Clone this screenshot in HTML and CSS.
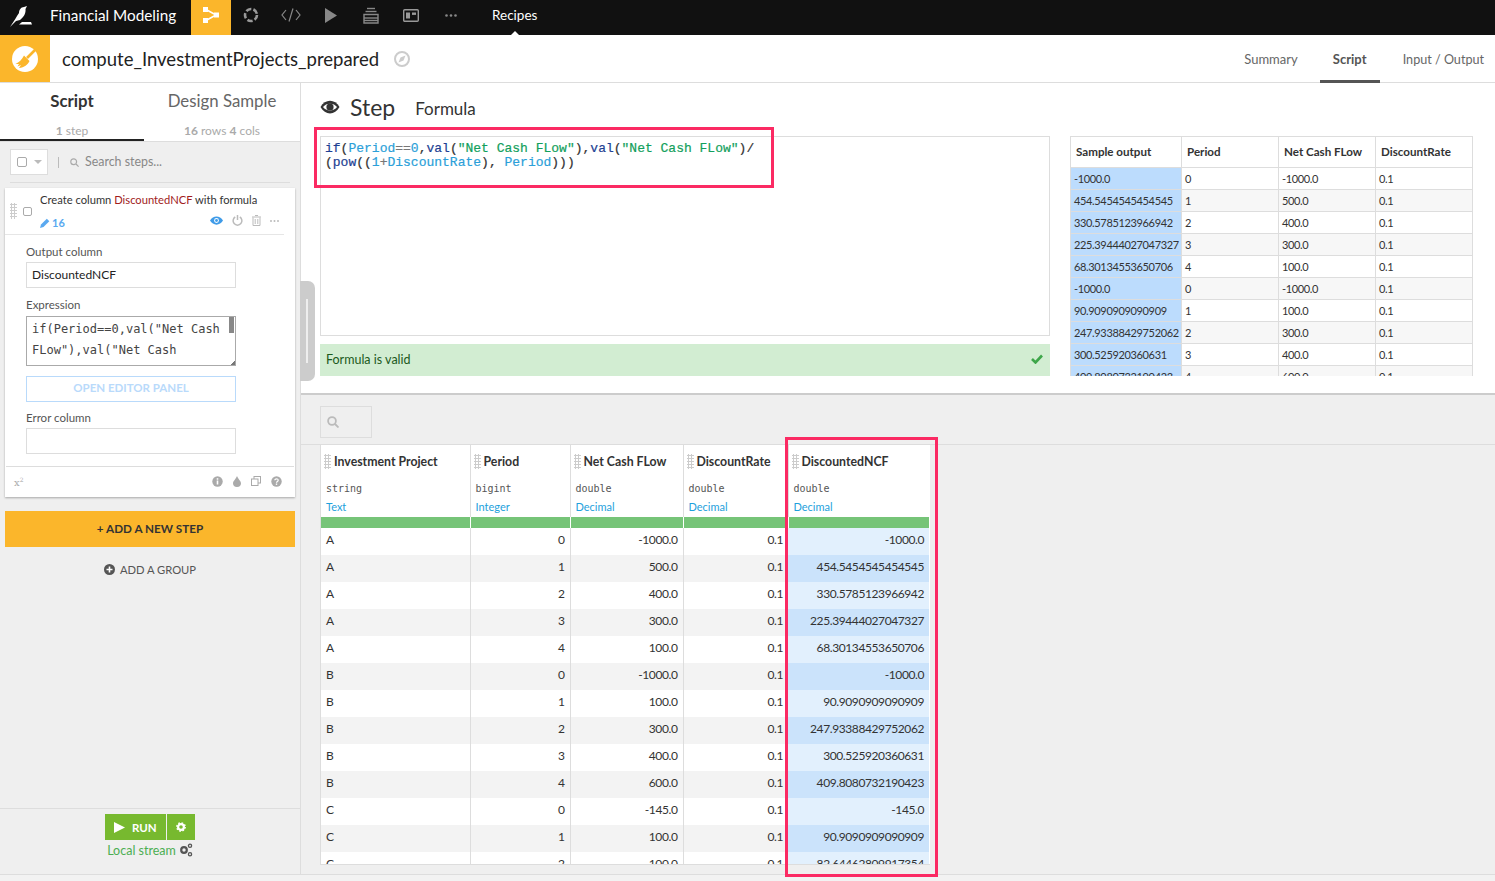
FILE: index.html
```html
<!DOCTYPE html>
<html lang="en">
<head>
<meta charset="utf-8">
<title>compute_InvestmentProjects_prepared</title>
<link rel="stylesheet" href="styles.css">
</head>
<body>
<nav class="topbar">
  <svg class="logo" width="24" height="24" viewBox="0 0 24 24"><path d="M1 23 C5 17 8 12 10 9 C10 6 12 3 15 3 L18 2 L16.5 5 C17 9 15 13 11 16 L7 17 C5 19 3 21 1 23Z" fill="#fff"/><path d="M13 18 L22 18 L23 20.5 L10 20.5Z" fill="#fff"/></svg>
  <span class="project">Financial Modeling</span>
  <span class="nav-item active"><svg width="16" height="18" viewBox="0 0 16 18"><g fill="#fff"><rect x="0" y="1" width="5" height="5"/><rect x="0" y="12" width="5" height="5"/><rect x="11" y="6.5" width="5" height="5"/></g><path d="M3 3.5 L13 9 L3 14.5" fill="none" stroke="#fff" stroke-width="1.6"/></svg></span>
  <span class="nav-item"><svg width="16" height="16" viewBox="0 0 16 16"><circle cx="8" cy="8" r="6" fill="none" stroke="#999" stroke-width="2.6" stroke-dasharray="5.4 2.1"/></svg></span>
  <span class="nav-item"><svg width="20" height="14" viewBox="0 0 20 14" fill="none" stroke="#888" stroke-width="1.2"><path d="M5 2 L1 7 L5 12"/><path d="M15 2 L19 7 L15 12"/><path d="M12 0.5 L8 13.5"/></svg></span>
  <span class="nav-item"><svg width="12" height="15" viewBox="0 0 12 15"><polygon points="0,0 12,7.5 0,15" fill="#888"/></svg></span>
  <span class="nav-item"><svg width="16" height="17" viewBox="0 0 16 17" fill="none" stroke="#888" stroke-width="1.4"><path d="M4 1.5 H12"/><path d="M2.5 4.5 H13.5"/><path d="M1 7.5 H15 V16 H1Z"/><path d="M1 11 H15"/><path d="M1 13.5 H15"/></svg></span>
  <span class="nav-item"><svg width="16" height="13" viewBox="0 0 16 13"><rect x="0.7" y="0.7" width="14.6" height="11.6" rx="1" fill="none" stroke="#999" stroke-width="1.4"/><rect x="3" y="3.5" width="4" height="6" fill="#999"/><rect x="9" y="3.5" width="4" height="2.4" fill="#999"/></svg></span>
  <span class="nav-item"><svg width="12" height="3" viewBox="0 0 12 3" fill="#888"><circle cx="1.5" cy="1.5" r="1.3"/><circle cx="6" cy="1.5" r="1.3"/><circle cx="10.5" cy="1.5" r="1.3"/></svg></span>
  <span class="nav-link">Recipes</span>
</nav>

<header class="recipe-head">
  <span class="recipe-icon"><svg width="26" height="26" viewBox="0 0 26 26"><circle cx="13" cy="13" r="13" fill="#fff"/><path d="M24 3 L15 12" stroke="#fbb62b" stroke-width="2.6"/><path d="M12 9.5 L17.5 15 C15.5 19 12.5 21.5 7 22 L9 19 L5.5 20.5 L7 18 L3.5 18 C7 16.5 10 13.5 12 9.5Z" fill="#fbb62b"/></svg></span>
  <h1 class="recipe-name">compute_InvestmentProjects_prepared</h1>
  <svg class="compass" width="16" height="16" viewBox="0 0 16 16"><circle cx="8" cy="8" r="7" fill="none" stroke="#ccc" stroke-width="2"/><path d="M11.5 4.5 L9.5 9.5 L4.5 11.5 L6.5 6.5Z" fill="#ccc"/></svg>
  <div class="head-tabs">
    <span class="head-tab">Summary</span>
    <span class="head-tab current">Script</span>
    <span class="head-tab">Input / Output</span>
  </div>
</header>

<div class="workspace">
  <aside class="sidebar">
    <div class="side-tabs">
      <div class="side-tab current"><span class="side-title">Script</span><span class="side-sub"><b>1</b> step</span></div>
      <div class="side-tab"><span class="side-title">Design Sample</span><span class="side-sub"><b>16</b> rows <b>4</b> cols</span></div>
    </div>
    <div class="side-body">
      <div class="search-row">
        <span class="select-box"><span class="check"></span><span class="caret"></span></span>
        <span class="pipe"></span>
        <svg width="9" height="9" viewBox="0 0 9 9" fill="none" stroke="#aaa" stroke-width="1.2"><circle cx="3.7" cy="3.7" r="2.9"/><path d="M6 6 L8.6 8.6"/></svg>
        <span class="search-text">Search steps...</span>
      </div>
      <section class="card">
        <div class="card-top">
          <span class="grip grip-card"></span>
          <span class="check small"></span>
          <div class="card-desc">
            <div>Create column <span class="red">DiscountedNCF</span> with formula</div>
            <div class="card-meta">
              <span class="edits"><svg width="10" height="10" viewBox="0 0 10 10"><path d="M0 10 L1 6.5 L6.8 0.7 L9.3 3.2 L3.5 9Z" fill="#5aa9f0"/></svg>16</span>
              <span class="card-icons">
                <svg width="13" height="9" viewBox="0 0 13 9"><path d="M0 4.5 C3 -1 10 -1 13 4.5 C10 10 3 10 0 4.5Z" fill="#3f9be8"/><circle cx="6.5" cy="4.5" r="2.4" fill="#fff"/><circle cx="6.5" cy="4.5" r="1.4" fill="#3f9be8"/></svg>
                <svg width="11" height="11" viewBox="0 0 11 11" fill="none" stroke="#bbb" stroke-width="1.5"><path d="M3.2 2 A4.4 4.4 0 1 0 7.8 2"/><path d="M5.5 0 V5"/></svg>
                <svg width="9" height="11" viewBox="0 0 9 11" fill="none" stroke="#bbb" stroke-width="1"><path d="M1 2.5 V10.5 H8 V2.5"/><path d="M0 2 H9"/><path d="M3 0.5 H6"/><path d="M3.2 4 V9 M5.8 4 V9"/></svg>
                <svg width="9" height="2" viewBox="0 0 9 2" fill="#bbb"><circle cx="1" cy="1" r="1"/><circle cx="4.5" cy="1" r="1"/><circle cx="8" cy="1" r="1"/></svg>
              </span>
            </div>
          </div>
        </div>
        <div class="form">
          <label class="field-label">Output column</label>
          <div class="input">DiscountedNCF</div>
          <label class="field-label">Expression</label>
          <div class="expr">if(Period==0,val("Net Cash FLow"),val("Net Cash FLow")/(pow((1+DiscountRate), Period)))<span class="thumb"></span><span class="resizer"></span></div>
          <div class="open-editor">OPEN EDITOR PANEL</div>
          <label class="field-label">Error column</label>
          <div class="input"></div>
        </div>
        <div class="card-foot">
          <span class="sup">x<sup>2</sup></span>
          <span class="foot-icons">
            <svg width="11" height="11" viewBox="0 0 11 11"><circle cx="5.5" cy="5.5" r="5.2" fill="#aaa"/><rect x="4.7" y="4.5" width="1.6" height="4" fill="#fff"/><rect x="4.7" y="2.2" width="1.6" height="1.5" fill="#fff"/></svg>
            <svg width="8" height="11" viewBox="0 0 8 11"><path d="M4 0 C5 3 8 5 8 7.3 A4 3.7 0 0 1 0 7.3 C0 5 3 3 4 0Z" fill="#aaa"/></svg>
            <svg width="10" height="10" viewBox="0 0 10 10" fill="#fff" stroke="#aaa"><rect x="3" y="0.5" width="6.5" height="6.5"/><rect x="0.5" y="3" width="6.5" height="6.5"/></svg>
            <svg width="11" height="11" viewBox="0 0 11 11"><circle cx="5.5" cy="5.5" r="5.2" fill="#aaa"/><path d="M3.8 4.2 C3.8 2.3 7.2 2.3 7.2 4.2 C7.2 5.5 5.5 5.3 5.5 6.7" fill="none" stroke="#fff" stroke-width="1.2"/><rect x="4.8" y="7.5" width="1.4" height="1.4" fill="#fff"/></svg>
          </span>
        </div>
      </section>
      <div class="add-step">+ ADD A NEW STEP</div>
      <div class="add-group"><svg width="11" height="11" viewBox="0 0 11 11"><circle cx="5.5" cy="5.5" r="5.5" fill="#555"/><path d="M5.5 2.5 V8.5 M2.5 5.5 H8.5" stroke="#fff" stroke-width="1.6"/></svg>ADD A GROUP</div>
    </div>
    <div class="side-foot">
      <div class="run-group">
        <span class="run"><svg width="11" height="11" viewBox="0 0 11 11"><polygon points="0,0 11,5.5 0,11" fill="#fff"/></svg>RUN</span>
        <span class="run-gear"><svg width="10" height="10" viewBox="0 0 10 10"><circle cx="5" cy="5" r="2.9" fill="none" stroke="#fff" stroke-width="2.2"/><circle cx="5" cy="5" r="4.2" fill="none" stroke="#fff" stroke-width="1.4" stroke-dasharray="1.6 1.7"/></svg></span>
      </div>
      <div class="stream">Local stream <svg width="14" height="14" viewBox="0 0 14 14" fill="none" stroke="#555"><circle cx="5" cy="7" r="2.8" stroke-width="2.2"/><circle cx="11" cy="2.8" r="1.6" stroke-width="1.3"/><circle cx="11" cy="11.2" r="1.6" stroke-width="1.3"/></svg></div>
    </div>
  </aside>

  <main class="content">
    <span class="handle"><span class="handle-slit"></span></span>
    <section class="step-pane">
      <div class="step-title">
        <svg width="20" height="14" viewBox="0 0 20 14"><path d="M0.5 7 C5 -1.5 15 -1.5 19.5 7 C15 15.5 5 15.5 0.5 7Z" fill="#333"/><path d="M3 7 C6 2.5 14 2.5 17 7 C14 11.5 6 11.5 3 7Z" fill="#fff"/><circle cx="10" cy="7" r="3.6" fill="#333"/></svg>
        <span class="step-word">Step</span>
        <span class="step-kind">Formula</span>
      </div>
      <div class="step-cols">
        <div class="editor-col">
          <div class="code"><span class="kw">if</span>(<span class="var">Period</span><span class="op">==</span><span class="var">0</span>,<span class="kw">val</span>(<span class="str">"Net Cash FLow"</span>),<span class="kw">val</span>(<span class="str">"Net Cash FLow"</span>)/<br>(<span class="kw">pow</span>((<span class="var">1</span><span class="op">+</span><span class="var">DiscountRate</span>), <span class="var">Period</span>)))</div>
          <div class="valid"><span>Formula is valid</span><svg width="12" height="10" viewBox="0 0 12 10"><path d="M1 5 L4.5 8.5 L11 1.5" fill="none" stroke="#3ea64a" stroke-width="2.6"/></svg></div>
        </div>
        <div class="sample-wrap">
          <table class="sample">
            <colgroup><col class="s1"><col class="s2"><col class="s2"><col class="s2"></colgroup>
            <thead><tr><th>Sample output</th><th>Period</th><th>Net Cash FLow</th><th>DiscountRate</th></tr></thead>
            <tbody>
              <tr><td>-1000.0</td><td>0</td><td>-1000.0</td><td>0.1</td></tr>
              <tr><td>454.5454545454545</td><td>1</td><td>500.0</td><td>0.1</td></tr>
              <tr><td>330.5785123966942</td><td>2</td><td>400.0</td><td>0.1</td></tr>
              <tr><td>225.39444027047327</td><td>3</td><td>300.0</td><td>0.1</td></tr>
              <tr><td>68.30134553650706</td><td>4</td><td>100.0</td><td>0.1</td></tr>
              <tr><td>-1000.0</td><td>0</td><td>-1000.0</td><td>0.1</td></tr>
              <tr><td>90.9090909090909</td><td>1</td><td>100.0</td><td>0.1</td></tr>
              <tr><td>247.93388429752062</td><td>2</td><td>300.0</td><td>0.1</td></tr>
              <tr><td>300.525920360631</td><td>3</td><td>400.0</td><td>0.1</td></tr>
              <tr><td>409.8080732190423</td><td>4</td><td>600.0</td><td>0.1</td></tr>
            </tbody>
          </table>
        </div>
      </div>
    </section>

    <section class="data-pane">
      <div class="data-search"><svg width="12" height="12" viewBox="0 0 12 12" fill="none" stroke="#bbb" stroke-width="1.8"><circle cx="5" cy="5" r="3.9"/><path d="M8 8 L11.5 11.5"/></svg></div>
      <div class="data-rule">
        <div class="data-wrap">
          <table class="data">
            <colgroup><col class="d1"><col class="d2"><col class="d3"><col class="d4"><col class="d5"></colgroup>
            <thead>
              <tr class="names"><th><span class="grip"></span>Investment Project</th><th><span class="grip"></span>Period</th><th><span class="grip"></span>Net Cash FLow</th><th><span class="grip"></span>DiscountRate</th><th><span class="grip"></span>DiscountedNCF</th></tr>
              <tr class="types"><td>string</td><td>bigint</td><td>double</td><td>double</td><td>double</td></tr>
              <tr class="means"><td>Text</td><td>Integer</td><td>Decimal</td><td>Decimal</td><td>Decimal</td></tr>
              <tr class="quality"><td></td><td></td><td></td><td></td><td></td></tr>
            </thead>
            <tbody>
              <tr><td>A</td><td>0</td><td>-1000.0</td><td>0.1</td><td>-1000.0</td></tr>
              <tr><td>A</td><td>1</td><td>500.0</td><td>0.1</td><td>454.5454545454545</td></tr>
              <tr><td>A</td><td>2</td><td>400.0</td><td>0.1</td><td>330.5785123966942</td></tr>
              <tr><td>A</td><td>3</td><td>300.0</td><td>0.1</td><td>225.39444027047327</td></tr>
              <tr><td>A</td><td>4</td><td>100.0</td><td>0.1</td><td>68.30134553650706</td></tr>
              <tr><td>B</td><td>0</td><td>-1000.0</td><td>0.1</td><td>-1000.0</td></tr>
              <tr><td>B</td><td>1</td><td>100.0</td><td>0.1</td><td>90.9090909090909</td></tr>
              <tr><td>B</td><td>2</td><td>300.0</td><td>0.1</td><td>247.93388429752062</td></tr>
              <tr><td>B</td><td>3</td><td>400.0</td><td>0.1</td><td>300.525920360631</td></tr>
              <tr><td>B</td><td>4</td><td>600.0</td><td>0.1</td><td>409.8080732190423</td></tr>
              <tr><td>C</td><td>0</td><td>-145.0</td><td>0.1</td><td>-145.0</td></tr>
              <tr><td>C</td><td>1</td><td>100.0</td><td>0.1</td><td>90.9090909090909</td></tr>
              <tr><td>C</td><td>2</td><td>100.0</td><td>0.1</td><td>82.64462809917354</td></tr>
            </tbody>
          </table>
        </div>
      </div>
    </section>
  </main>
</div>
<span class="mark mark-code"></span>
<span class="mark mark-col"></span>
</body>
</html>
```
FILE: styles.css
```css
* { box-sizing: border-box; }
html, body { margin: 0; padding: 0; }
body {
  position: relative;
  width: 1495px;
  height: 881px;
  overflow: hidden;
  background: #f2f2f2;
  font-family: "Lato", "Noto Sans", sans-serif;
  font-size: 12px;
  color: #333;
}
.topbar {
  display: flex;
  align-items: center;
  height: 35px;
  background: #111;
  color: #fff;
}
.logo { margin: 0 17px 4px 9px; flex: none; }
.project { font-size: 15.3px; width: 141px; flex: none; padding-bottom: 5px; }
.nav-item { display: flex; align-items: center; justify-content: center; width: 40px; height: 35px; padding-bottom: 5px; flex: none; }
.nav-item.active { background: #fbb62b; }
.nav-link { position: relative; margin-left: 21px; font-size: 13.5px; display: flex; align-items: center; height: 35px; padding-bottom: 5px; }
.nav-link::after {
  content: "";
  position: absolute;
  left: 50%;
  bottom: 0;
  margin-left: -4px;
  border: 4px solid transparent;
  border-top: 0;
  border-bottom-color: #fff;
}
.recipe-head {
  display: flex;
  align-items: center;
  height: 48px;
  background: #fff;
  border-bottom: 1px solid #ddd;
}
.recipe-icon { display: flex; align-items: center; justify-content: center; width: 50px; height: 47px; background: #fbb62b; }
.recipe-name { margin: 0 0 0 12px; font-size: 18.5px; font-weight: 400; color: #222; }
.compass { margin-left: 15px; }
.head-tabs { display: flex; margin-left: auto; height: 47px; padding-right: 11px; }
.head-tab { display: flex; align-items: center; font-size: 13px; color: #666; height: 48px; padding: 0 13px 0 0; margin-left: 22px; }
.head-tab.current { font-weight: 700; color: #555; border-bottom: 3px solid #555; padding: 3px 13px 0; margin-left: 9px; margin-right: -13px; width: 60px; justify-content: center; }
.head-tab:last-child { padding-right: 0; margin-left: 36px; font-size: 12.6px; }
.workspace { display: flex; height: 792px; border-bottom: 1px solid #ddd; }
.sidebar {
  display: flex;
  flex-direction: column;
  flex: none;
  width: 301px;
  background: #efefef;
  border-right: 1px solid #ddd;
}
.side-tabs { display: flex; height: 59px; background: #fff; border-bottom: 1px solid #ddd; flex: none; }
.side-tab { display: flex; flex-direction: column; align-items: center; width: 144px; height: 58px; }
.side-tab + .side-tab { width: 156px; }
.side-tab.current { border-bottom: 2px solid #222; }
.side-title { margin-top: 8px; font-size: 16.8px; line-height: 20px; color: #666; }
.current .side-title { font-weight: 700; color: #333; }
.side-sub { margin-top: 13px; font-size: 12px; line-height: 14px; color: #aaa; }
.side-sub b { font-weight: 700; }
.side-body { padding: 0 5px; flex: 1; }
.search-row {
  display: flex;
  align-items: center;
  height: 41px;
  margin: 0 5px 5px;
  border-bottom: 1px solid #ddd;
}
.select-box { display: flex; align-items: center; gap: 7px; width: 38px; height: 26px; padding-left: 6px; background: #fff; border: 1px solid #ddd; }
.check { display: block; width: 10px; height: 10px; border: 1px solid #aaa; border-radius: 2px; background: #fff; flex: none; }
.check.small { width: 9px; height: 9px; }
.caret { border: 4px solid transparent; border-bottom: 0; border-top-color: #bbb; }
.pipe { width: 1px; height: 11px; background: #bbb; margin: 0 11px 0 10px; }
.search-text { margin: 0 0 2px 6px; font-size: 12.4px; color: #888; }
.card { background: #fff; box-shadow: 0 1px 2px rgba(0,0,0,.3); height: 309px; display: flex; flex-direction: column; }
.card-top { display: flex; height: 47px; position: relative; margin: 0 11px 0 0; border-bottom: 1px solid #e6e6e6; }
.card-top .check { margin: 19px 0 0 18px; }
.grip {
  display: inline-block;
  width: 7px;
  height: 15px;
  margin-right: 3px;
  vertical-align: -3px;
  background-image: radial-gradient(circle, #ccc 1px, transparent 1.1px);
  background-size: 3px 3px;
}
.grip-card { position: absolute; left: 5px; top: 15px; height: 16px; margin: 0; }
.card-desc { margin-left: 8px; flex: 1; font-size: 11.2px; padding-top: 5px; color: #333; }
.red { color: #a11c1c; }
.card-meta { display: flex; justify-content: space-between; align-items: center; margin-top: 8px; padding-right: 5px; }
.edits { display: flex; align-items: center; gap: 2px; color: #5aa9f0; font-weight: 700; font-size: 11px; margin-top: 2px; }
.card-icons { display: flex; align-items: center; gap: 9px; margin-top: -2px; }
.form { padding: 0 21px; }
.field-label { display: block; margin-top: 10px; height: 16px; line-height: 14px; font-size: 11.5px; color: #555; }
.input { height: 26px; margin-top: 1px; width: 210px; padding: 0 5px; line-height: 24px; background: #fff; border: 1px solid #ddd; font-size: 12px; color: #222; }
.expr {
  position: relative;
  width: 210px;
  height: 50px;
  margin-top: 2px;
  padding: 2px 15px 0 5px;
  overflow: hidden;
  border: 1px solid #aaa;
  font-family: "DejaVu Sans Mono", monospace;
  font-size: 12px;
  line-height: 21px;
  color: #444;
  word-break: break-word;
}
.thumb { position: absolute; right: 1px; top: 0; width: 5px; height: 16px; background: #888; }
.resizer { position: absolute; right: 0; bottom: 0; width: 5px; height: 5px; background: linear-gradient(135deg, #fff 60%, #777 60%); }
.open-editor {
  width: 210px;
  height: 26px;
  margin-top: 10px;
  border: 1px solid #b9dafb;
  text-align: center;
  line-height: 22px;
  font-weight: 700;
  font-size: 11.5px;
  color: #b9dafb;
}
.open-editor + .field-label { margin-top: 9px; }
.card-foot {
  display: flex;
  align-items: center;
  justify-content: space-between;
  margin: 12px 1px 0;
  padding: 0 12px 0 8px;
  height: 31px;
  border-top: 1px solid #ddd;
}
.sup { font-family: "DejaVu Serif", serif; font-size: 10px; color: #aaa; }
.sup sup { font-size: 6px; line-height: 0; }
.foot-icons { display: flex; align-items: center; gap: 10px; margin-top: -2px; }
.add-step {
  height: 36px;
  margin-top: 14px;
  background: #fbb62b;
  text-align: center;
  line-height: 34px;
  font-weight: 700;
  font-size: 11.7px;
  color: #333;
}
.add-group { display: flex; align-items: center; justify-content: center; gap: 5px; margin-top: 14px; height: 16px; font-size: 11.2px; color: #555; }
.side-foot { height: 66px; flex: none; border-top: 1px solid #ddd; padding-top: 5px; }
.run-group { display: flex; justify-content: center; gap: 1px; }
.run { display: flex; align-items: center; gap: 7px; width: 61px; height: 26px; padding-left: 9px; background: #77b92f; color: #fff; font-weight: 700; font-size: 11.5px; }
.run-gear { display: flex; align-items: center; justify-content: center; width: 28px; height: 26px; background: #77b92f; }
.stream { display: flex; align-items: center; justify-content: center; gap: 3px; margin-top: 2px; height: 16px; font-size: 12.5px; color: #4cae52; }
.content { position: relative; flex: 1; display: flex; flex-direction: column; min-width: 0; }
.handle { position: absolute; left: -1px; top: 198px; width: 15px; height: 100px; background: #ccc; border-radius: 0 7px 7px 0; }
.handle-slit { position: absolute; left: 6px; top: 18px; width: 2px; height: 64px; background: #eee; }
.step-pane { height: 312px; flex: none; background: #fff; border-bottom: 2px solid #ccc; padding-left: 19px; }
.step-title { display: flex; align-items: center; height: 53px; padding-bottom: 5px; }
.step-word { margin-left: 10px; font-size: 23px; color: #333; }
.step-kind { margin-left: 20px; font-size: 17px; color: #333; margin-top: 2px; }
.step-cols { display: flex; gap: 20px; }
.editor-col { width: 730px; flex: none; }
.code {
  height: 200px;
  padding: 5px 4px;
  border: 1px solid #ddd;
  font-family: "Liberation Mono", monospace;
  font-size: 13px;
  line-height: 14px;
  color: #333;
  -webkit-text-stroke: 0.2px;
}
.kw { color: #1d3f93; }
.var { color: #2b9fd9; }
.op { color: #777; }
.str { color: #12a05c; }
.valid {
  display: flex;
  align-items: center;
  justify-content: space-between;
  height: 32px;
  margin-top: 8px;
  padding: 0 7px 2px 6px;
  background: #d2edd2;
  color: #1c5a1c;
  font-size: 12.5px;
}
.sample-wrap { width: 403px; height: 240px; overflow: hidden; flex: none; }
.sample { width: 403px; table-layout: fixed; border-collapse: collapse; font-size: 11px; color: #333; }
.s1 { width: 111px; }
.s2 { width: 97px; }
.sample th, .sample td { border: 1px solid #ddd; white-space: nowrap; overflow: hidden; text-align: left; }
.sample th { height: 31px; padding: 0 5px 2px; font-weight: 700; font-size: 11.6px; }
.sample td { height: 22px; padding: 0 3px; letter-spacing: -0.35px; }
.sample td:first-child { background: #bcdcfd; }
.sample tbody tr:nth-child(even) { background: #f7f7f7; }
.data-pane { flex: 1; min-height: 0; padding-top: 11px; background: #efefef; display: flex; flex-direction: column; }
.data-search { margin-left: 19px; width: 52px; height: 32px; padding: 9px 0 0 6px; border: 1px solid #ddd; flex: none; }
.data-rule { margin-top: 6px; border-top: 1px solid #ddd; padding-left: 19px; flex: 1; min-height: 0; padding-bottom: 9px; }
.data-wrap { width: 610px; height: 100%; overflow: hidden; background: #fff; border-left: 1px solid #ddd; border-bottom: 1px solid #ddd; }
.data { width: 608px; table-layout: fixed; border-collapse: collapse; font-size: 12px; color: #333; }
.d1 { width: 149px; }
.d2 { width: 100px; }
.d3 { width: 113px; }
.d4 { width: 105px; }
.d5 { width: 141px; }
.data th, .data td { padding: 0 5px; border-left: 1px solid #ddd; white-space: nowrap; }
.data tr > :first-child { border-left: 0; }
.names th { height: 34px; padding: 0 3px 1px; text-align: left; font-weight: 700; font-size: 12.3px; }
.types td { height: 20px; padding-bottom: 1px; font-family: "DejaVu Sans Mono", monospace; font-size: 10px; color: #555; }
.means td { height: 18px; padding-bottom: 3px; font-size: 11px; color: #1ea1dc; }
.quality td { height: 11px; padding: 0; background: #76c478; border-left-color: #fff; }
.data tbody td { height: 27px; padding-bottom: 4px; text-align: right; letter-spacing: -0.4px; }
.data tbody td:first-child { text-align: left; }
.data tbody tr:nth-child(even) { background: #f3f3f3; }
.data tbody td:last-child { background: #e2f0fd; border-left: 0; }
.data tbody tr:nth-child(even) td:last-child { background: #cbe3fb; }
.mark { position: absolute; border: 3px solid #fb2a63; }
.mark-code { left: 314px; top: 127px; width: 460px; height: 61px; }
.mark-col { left: 785px; top: 437px; width: 153px; height: 440px; }
```
